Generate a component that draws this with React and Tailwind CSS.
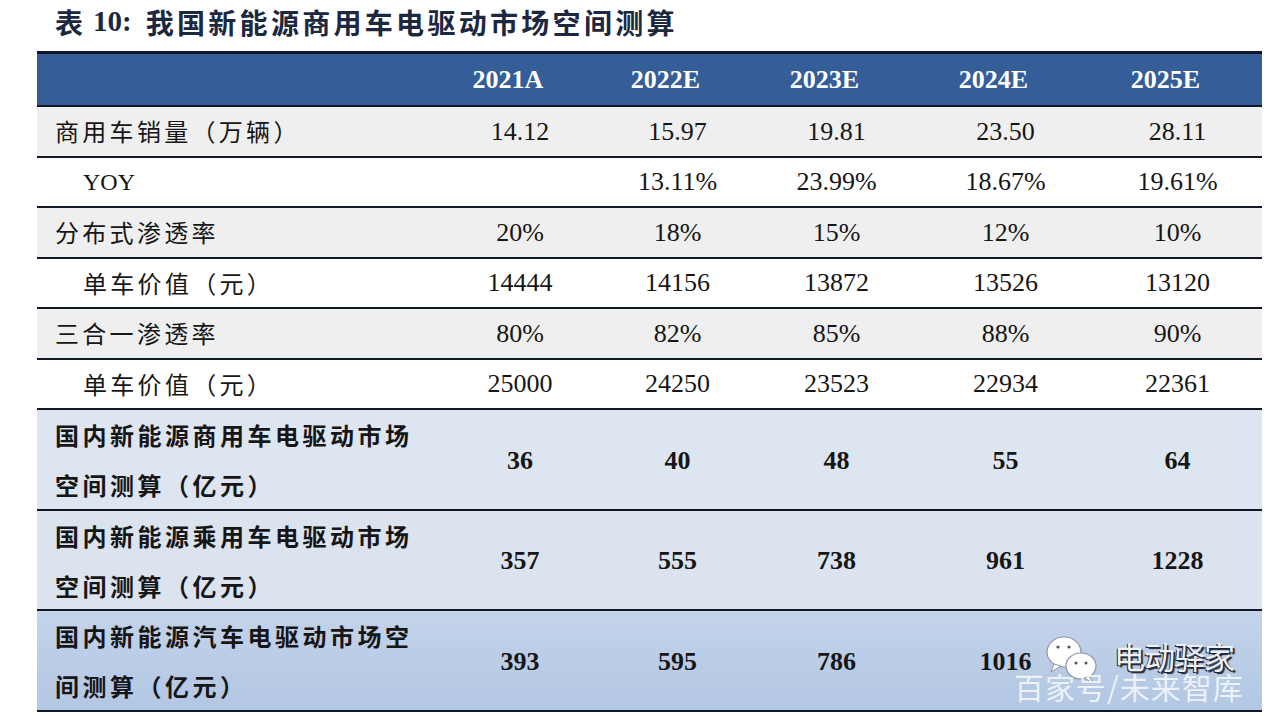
import React from 'react';

const SERIF = "font-['Liberation_Serif','Noto_Sans_CJK_SC',serif]";
const CJK = "font-['Noto_Sans_CJK_SC','Liberation_Serif',sans-serif]";

const years = ['2021A', '2022E', '2023E', '2024E', '2025E'];

const rows = [
    { label: '商用车销量（万辆）', values: ['14.12', '15.97', '19.81', '23.50', '28.11'], bg: 'bg-[#efefef]' },
    { label: 'YOY', indent: true, serif: true, values: ['', '13.11%', '23.99%', '18.67%', '19.61%'], bg: 'bg-white' },
    { label: '分布式渗透率', values: ['20%', '18%', '15%', '12%', '10%'], bg: 'bg-[#efefef]' },
    { label: '单车价值（元）', indent: true, values: ['14444', '14156', '13872', '13526', '13120'], bg: 'bg-white' },
    { label: '三合一渗透率', values: ['80%', '82%', '85%', '88%', '90%'], bg: 'bg-[#efefef]' },
    { label: '单车价值（元）', indent: true, values: ['25000', '24250', '23523', '22934', '22361'], bg: 'bg-white' },
];

// last row's final cell is hidden under the watermark in the source
const totals = [
    { lines: ['国内新能源商用车电驱动市场', '空间测算（亿元）'], values: ['36', '40', '48', '55', '64'], bg: 'bg-[#dde5f0]' },
    { lines: ['国内新能源乘用车电驱动市场', '空间测算（亿元）'], values: ['357', '555', '738', '961', '1228'], bg: 'bg-[#dbe3ef]' },
    { lines: ['国内新能源汽车电驱动市场空', '间测算（亿元）'], values: ['393', '595', '786', '1016', ''], bg: 'bg-gradient-to-b from-[#c3d3ea] to-[#b3c7e3]' },
];

const GRID = 'grid grid-cols-[403px_160px_155px_163px_175px_169px]';

function WeChatIcon() {
    return (
        <svg width="62" height="54" viewBox="0 0 62 54">
            <ellipse cx="22" cy="20" rx="17" ry="15" fill="#fff" stroke="#8b96a8" strokeWidth="1.2" />
            <path d="M12 32 L9 40 L19 34 Z" fill="#fff" stroke="#8b96a8" strokeWidth="1" />
            <circle cx="16" cy="15" r="1.6" fill="#555" />
            <circle cx="27" cy="15" r="1.6" fill="#555" />
            <ellipse cx="39" cy="34" rx="15" ry="13" fill="#fff" stroke="#8b96a8" strokeWidth="1.2" />
            <path d="M47 44 L51 51 L42 46 Z" fill="#fff" stroke="#8b96a8" strokeWidth="1" />
            <circle cx="34" cy="31" r="1.5" fill="#555" />
            <circle cx="44" cy="31" r="1.5" fill="#555" />
        </svg>
    );
}

export default function App() {
    return (
        <div className="relative w-[1280px] h-[716px] overflow-hidden bg-white text-[#161616]">
            <div className="flex items-center h-[44px] pl-[55px] text-[#1c2740] font-bold">
                <span className={`text-[28px] ${CJK}`}>表</span>
                <span className={`text-[29px] ml-[10px] ${SERIF}`}>10:</span>
                <span className={`text-[28px] tracking-[3.3px] ml-[14px] ${CJK}`}>我国新能源商用车电驱动市场空间测算</span>
            </div>

            <div className="ml-[37px] mt-[7px] w-[1225px]">
                <div className={`${GRID} h-[56px] bg-[#355e98] border-t-[3px] border-b-[2px] border-[#0e1628] text-white font-bold text-[26px] ${SERIF}`}>
                    <div />
                    {years.map((y) => (
                        <div key={y} className="flex items-center justify-center pr-[24px]">{y}</div>
                    ))}
                </div>

                {rows.map((r, i) => (
                    <div key={i} className={`${GRID} h-[50.5px] border-b-[2px] border-[#111827] ${r.bg}`}>
                        <div className={`flex items-center text-[24px] ${r.indent ? 'pl-[46px]' : 'pl-[18px]'} ${r.serif ? SERIF : `tracking-[3.3px] ${CJK}`}`}>
                            {r.label}
                        </div>
                        {r.values.map((v, j) => (
                            <div key={j} className={`flex items-center justify-center text-[26px] ${SERIF}`}>{v}</div>
                        ))}
                    </div>
                ))}

                {totals.map((r, i) => (
                    <div key={i} className={`${GRID} h-[100.5px] border-b-[2px] border-[#0e1628] ${r.bg}`}>
                        <div className={`flex flex-col justify-center pl-[18px] text-[24px] font-bold tracking-[3.5px] leading-[50px] ${CJK}`}>
                            {r.lines.map((l) => <div key={l}>{l}</div>)}
                        </div>
                        {r.values.map((v, j) => (
                            <div key={j} className={`flex items-center justify-center text-[26px] font-bold ${SERIF}`}>{v}</div>
                        ))}
                    </div>
                ))}
            </div>

            <div className="absolute left-[1042px] top-[632px]">
                <WeChatIcon />
            </div>
            <div className={`absolute left-[1114px] top-[640px] leading-none text-[31px] text-[#eef1f6] tracking-[-1px] [text-shadow:2px_2px_1px_#1f2535,-1px_1px_0_#1f2535] ${CJK}`}>
                电动驿家
            </div>
            <div className={`absolute left-[1014px] top-[671px] leading-none text-[30px] text-white/75 tracking-[1px] ${CJK}`}>
                百家号/未来智库
            </div>
        </div>
    );
}
